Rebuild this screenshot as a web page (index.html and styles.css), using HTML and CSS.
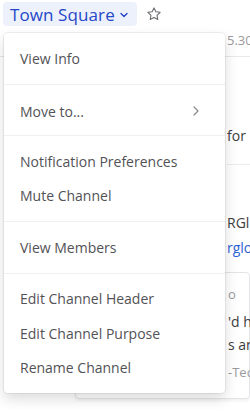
FILE: index.html
```html
<!DOCTYPE html>
<html lang="en">
<head>
    <meta charset="UTF-8">
    <meta name="viewport" content="width=device-width, initial-scale=1.0">
    <title>Town Square</title>
    <link rel="stylesheet" href="styles.css">
</head>
<body>
    <div class="page">
        <div class="header">
            <button class="channel-btn">
                Town Square
                <svg class="chevron" width="10" height="10" viewBox="0 0 10 10"><path d="M2 3.5 L5 6.5 L8 3.5" fill="none" stroke="currentColor" stroke-width="1.4" stroke-linecap="round" stroke-linejoin="round"/></svg>
            </button>
            <svg class="star" width="16" height="16" viewBox="0 0 24 24"><path d="M12 2.8l2.8 5.9 6.4.8-4.7 4.4 1.2 6.4L12 17.2l-5.7 3.1 1.2-6.4-4.7-4.4 6.4-.8z" fill="none" stroke="currentColor" stroke-width="1.6" stroke-linejoin="round"/></svg>
        </div>

        <div class="posts">
            <div class="line meta version">5.30</div>
            <div class="line text intro">for</div>
            <div class="rule"></div>
            <div class="line text first">RGl</div>
            <div class="line link">rglo</div>
            <div class="card">
                <div class="line meta">o</div>
                <div class="line text quote">'d h</div>
                <div class="line text">s an</div>
                <div class="line meta sign">-Tec</div>
            </div>
        </div>

        <div class="menu">
            <div class="group">
                <div class="item">View Info</div>
            </div>
            <div class="group">
                <div class="item move">Move to...
                    <svg class="arrow" width="10" height="12" viewBox="0 0 10 12"><path d="M3 2 L7 6 L3 10" fill="none" stroke="currentColor" stroke-width="1.2" stroke-linecap="round" stroke-linejoin="round"/></svg>
                </div>
            </div>
            <div class="group">
                <div class="item">Notification Preferences</div>
                <div class="item">Mute Channel</div>
            </div>
            <div class="group">
                <div class="item">View Members</div>
            </div>
            <div class="group">
                <div class="item">Edit Channel Header</div>
                <div class="item">Edit Channel Purpose</div>
                <div class="item">Rename Channel</div>
            </div>
        </div>
    </div>
</body>
</html>
```

FILE: styles.css
```css
body {
    margin: 0;
    background: #fff;
    font-family: "Open Sans", sans-serif;
    color: #3d3c40;
}
.page {
    position: relative;
    width: 250px;
    height: 412px;
    overflow: hidden;
}
.header {
    display: flex;
    align-items: flex-start;
    gap: 9px;
    padding: 2px 0 0 3px;
    height: 54px;
    border-bottom: 1px solid #e8e8e9;
}
.channel-btn {
    display: flex;
    align-items: center;
    gap: 4px;
    height: 24px;
    padding: 0 8px 0 7px;
    border: none;
    border-radius: 4px;
    background: #edf1fb;
    color: #2446c8;
    font-family: "Open Sans", sans-serif;
    font-size: 17px;
    font-weight: 500;
    letter-spacing: 0.1px;
}
.chevron {
    margin-top: 1px;
}
.star {
    color: #6b6b70;
    margin-top: 4px;
}
.posts {
    padding-left: 227px;
    font-size: 14px;
}
.line {
    height: 23px;
    line-height: 23px;
    white-space: nowrap;
}
.meta {
    color: #9a9a9e;
    font-size: 13px;
}
.text {
    color: #3d3c40;
}
.link {
    color: #2c62d6;
    margin-top: 2px;
    margin-bottom: 13px;
}
.rule {
    height: 1px;
    background: #ececed;
}
.version {
    margin-top: -28px;
    margin-bottom: 72px;
}
.intro {
    margin-bottom: 17px;
}
.first {
    margin-top: 46px;
}
.card {
    margin-left: -152px;
    padding: 10px 0 14px 152px;
    border: 1px solid #e4e4e6;
    border-radius: 4px;
    box-shadow: 0 2px 3px rgba(0, 0, 0, 0.06);
}
.quote {
    margin-top: 4px;
}
.sign {
    margin-top: 5px;
}
.menu {
    position: absolute;
    left: 4px;
    top: 33px;
    width: 221px;
    background: #fff;
    border-radius: 4px;
    box-shadow: 0 6px 14px rgba(0, 0, 0, 0.14), 0 0 0 1px rgba(0, 0, 0, 0.06);
}
.group {
    padding: 8px 0;
    border-top: 1px solid #efeff0;
}
.group:first-child {
    border-top: none;
}
.item {
    display: flex;
    align-items: center;
    justify-content: space-between;
    height: 34.5px;
    padding: 0 24px 0 16px;
    font-size: 14px;
    color: #525256;
}
.move {
    padding-top: 3px;
    height: 31.5px;
}
.arrow {
    color: #8a8a8e;
}
```
